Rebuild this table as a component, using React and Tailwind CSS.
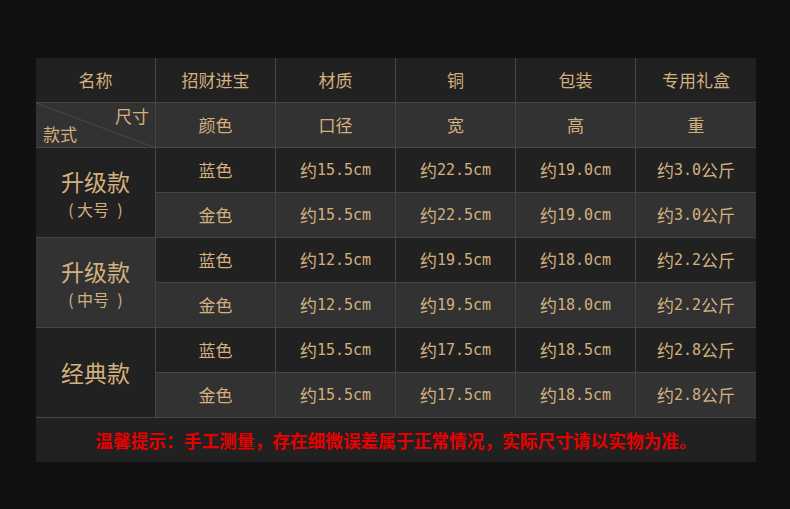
const rows = [
  { color: "蓝色", d: "约15.5cm", w: "约22.5cm", h: "约19.0cm", kg: "约3.0公斤" },
  { color: "金色", d: "约15.5cm", w: "约22.5cm", h: "约19.0cm", kg: "约3.0公斤" },
  { color: "蓝色", d: "约12.5cm", w: "约19.5cm", h: "约18.0cm", kg: "约2.2公斤" },
  { color: "金色", d: "约12.5cm", w: "约19.5cm", h: "约18.0cm", kg: "约2.2公斤" },
  { color: "蓝色", d: "约15.5cm", w: "约17.5cm", h: "约18.5cm", kg: "约2.8公斤" },
  { color: "金色", d: "约15.5cm", w: "约17.5cm", h: "约18.5cm", kg: "约2.8公斤" },
]

const models = [
  { name: "升级款", size: "大号", bg: "bg-[#212121]" },
  { name: "升级款", size: "中号", bg: "bg-[#323232]" },
  { name: "经典款", size: null, bg: "bg-[#212121]" },
]

const cjk = "font-['Noto_Sans_CJK_SC',sans-serif]"

function Cell({ children, bg, last, className = "" }) {
  return (
    <div
      className={`flex items-center justify-center border-b border-[#454545] ${
        last ? "" : "border-r"
      } ${bg} ${className}`}
    >
      {children}
    </div>
  )
}

// ascii runs in a narrow mono font, chinese in the cjk font
function Measure({ text }) {
  const parts = text.match(/[\x00-\x7f]+|[^\x00-\x7f]+/g)
  return parts.map((p, i) =>
    /[\x00-\x7f]/.test(p) ? (
      <span key={i} className="font-['DejaVu_Sans_Mono',monospace] text-[15px]">
        {p}
      </span>
    ) : (
      <span key={i}>{p}</span>
    )
  )
}

export default function App() {
  return (
    <div className="h-[509px] w-[790px] bg-[#111111] pl-[36px] pt-[58px]">
      <div className={`w-[720px] text-[#d3b07e] ${cjk}`}>
        <div className="grid grid-cols-[repeat(6,120px)] grid-rows-[repeat(8,45px)] text-[17px]">
          {/* header */}
          {["名称", "招财进宝", "材质", "铜", "包装", "专用礼盒"].map((t, i) => (
            <Cell key={t} bg="bg-[#212121]" last={i === 5}>
              {t}
            </Cell>
          ))}

          {/* diagonal cell */}
          <div className="relative border-b border-r border-[#454545] bg-[#323232]">
            <svg className="absolute inset-0" width="120" height="45">
              <line x1="0" y1="0" x2="120" y2="45" stroke="#4a4a4a" strokeWidth="1" />
            </svg>
            <span className="absolute right-[6px] top-[4px] leading-none">尺寸</span>
            <span className="absolute bottom-[5px] left-[7px] leading-none">款式</span>
          </div>
          {["颜色", "口径", "宽", "高", "重"].map((t, i) => (
            <Cell key={t} bg="bg-[#323232]" last={i === 4}>
              {t}
            </Cell>
          ))}

          {rows.map((r, i) => {
            const bg = i % 2 === 0 ? "bg-[#212121]" : "bg-[#323232]"
            const m = models[Math.floor(i / 2)]
            return [
              i % 2 === 0 && (
                <div
                  key={"m" + i}
                  className={`row-span-2 flex flex-col items-center justify-center border-b border-r border-[#454545] ${m.bg}`}
                >
                  <span className="text-[23px] leading-[33px]">{m.name}</span>
                  {m.size && (
                    <span className="flex items-center text-[16px] leading-[23px]">
                      <span className="w-[12px] text-center">(</span>
                      <span>{m.size}</span>
                      <span className="ml-[5px] w-[12px] text-center">)</span>
                    </span>
                  )}
                </div>
              ),
              <Cell key={"c" + i} bg={bg}>{r.color}</Cell>,
              <Cell key={"d" + i} bg={bg}><Measure text={r.d} /></Cell>,
              <Cell key={"w" + i} bg={bg}><Measure text={r.w} /></Cell>,
              <Cell key={"h" + i} bg={bg}><Measure text={r.h} /></Cell>,
              <Cell key={"k" + i} bg={bg} last><Measure text={r.kg} /></Cell>,
            ]
          })}
        </div>

        {/* footer note */}
        <div className="flex h-[44px] items-center justify-center bg-[#212121] text-[17.7px] font-bold text-[#e60000]">
          温馨提示：手工测量，存在细微误差属于正常情况，实际尺寸请以实物为准。
        </div>
      </div>
    </div>
  )
}
